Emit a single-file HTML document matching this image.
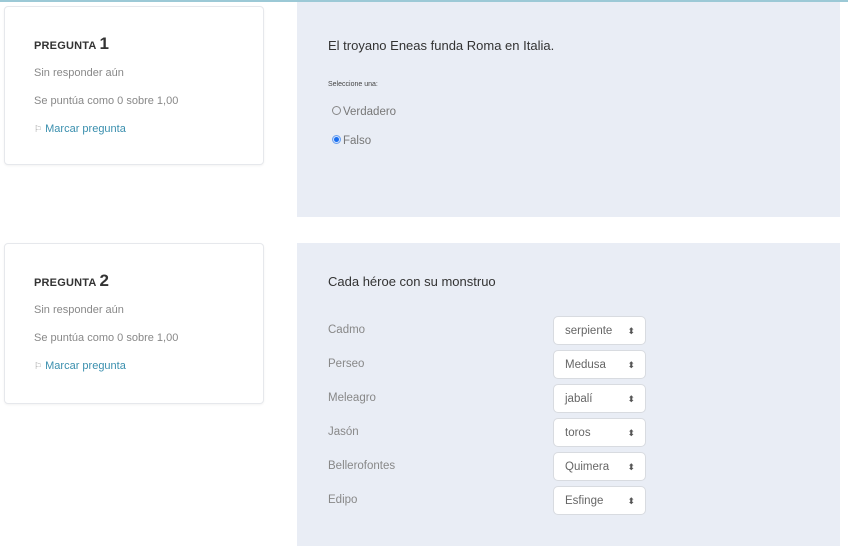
<!DOCTYPE html>
<html><head><meta charset="utf-8"><style>
body{margin:0;width:848px;height:546px;background:#fff;font-family:"Liberation Sans",sans-serif;position:relative;overflow:hidden}
.top{position:absolute;left:0;top:0;width:848px;height:2px;background:#9cc9d6}
.card{position:absolute;left:4px;width:258px;height:157px;border:1px solid #e6e8ec;border-radius:4px;background:#fff;box-shadow:0 1px 2px rgba(0,0,0,.05)}
.card .h{position:absolute;left:29px;top:27px;font-size:11px;font-weight:bold;color:#333;letter-spacing:.2px}
.card .h b{font-size:17px;margin-left:3px;font-weight:bold}
.card .t{position:absolute;left:29px;font-size:11px;color:#888}
.card .l{position:absolute;left:29px;font-size:11px;color:#3a8fae}
.panel{position:absolute;left:297px;width:543px;background:#e9edf5}
.q{position:absolute;left:31px;font-size:13px;color:#333}
.lab{position:absolute;left:31px;font-size:11.5px;color:#888}
.sel{position:absolute;left:256px;width:93px;height:29px;border:1px solid #d8dbe0;border-radius:5px;background:#fff;font-size:11.5px;color:#666;box-sizing:border-box;padding:8px 0 0 11px}
.sel:after{content:"⬍";position:absolute;right:10px;top:9px;font-size:9px;color:#555}
.r{position:absolute;left:35px;font-size:11.5px;color:#777}
.dot{display:inline-block;width:7px;height:7px;border:1px solid #888;border-radius:50%;margin-right:2px;vertical-align:0}
</style></head><body>
<div class="top"></div>
<div class="card" style="top:6px">
<div class="h">PREGUNTA<b>1</b></div>
<div class="t" style="top:60px">Sin responder aún</div>
<div class="t" style="top:88px">Se puntúa como 0 sobre 1,00</div>
<div class="l" style="top:116px"><span style="color:#999;font-size:9px">⚐</span> Marcar pregunta</div>
</div>
<div class="panel" style="top:2px;height:215px">
<div class="q" style="top:36px">El troyano Eneas funda Roma en Italia.</div>
<div style="position:absolute;left:31px;top:79px;font-size:7px;color:#444">Seleccione una:</div>
<div class="r" style="top:104px"><span class="dot"></span>Verdadero</div>
<div class="r" style="top:133px"><span class="dot" style="border-color:#6aa0f0;background:radial-gradient(#1a6ff0 45%,#cfe0fb 55%)"></span>Falso</div>
</div>
<div class="card" style="top:243px;height:159px">
<div class="h">PREGUNTA<b>2</b></div>
<div class="t" style="top:60px">Sin responder aún</div>
<div class="t" style="top:88px">Se puntúa como 0 sobre 1,00</div>
<div class="l" style="top:116px"><span style="color:#999;font-size:9px">⚐</span> Marcar pregunta</div>
</div>
<div class="panel" style="top:243px;height:303px">
<div class="q" style="top:31px">Cada héroe con su monstruo</div>
<div class="lab" style="top:81px">Cadmo</div><div class="sel" style="top:73px">serpiente</div>
<div class="lab" style="top:115px">Perseo</div><div class="sel" style="top:107px">Medusa</div>
<div class="lab" style="top:149px">Meleagro</div><div class="sel" style="top:141px">jabalí</div>
<div class="lab" style="top:183px">Jasón</div><div class="sel" style="top:175px">toros</div>
<div class="lab" style="top:217px">Bellerofontes</div><div class="sel" style="top:209px">Quimera</div>
<div class="lab" style="top:251px">Edipo</div><div class="sel" style="top:243px">Esfinge</div>
</div>
</body></html>
